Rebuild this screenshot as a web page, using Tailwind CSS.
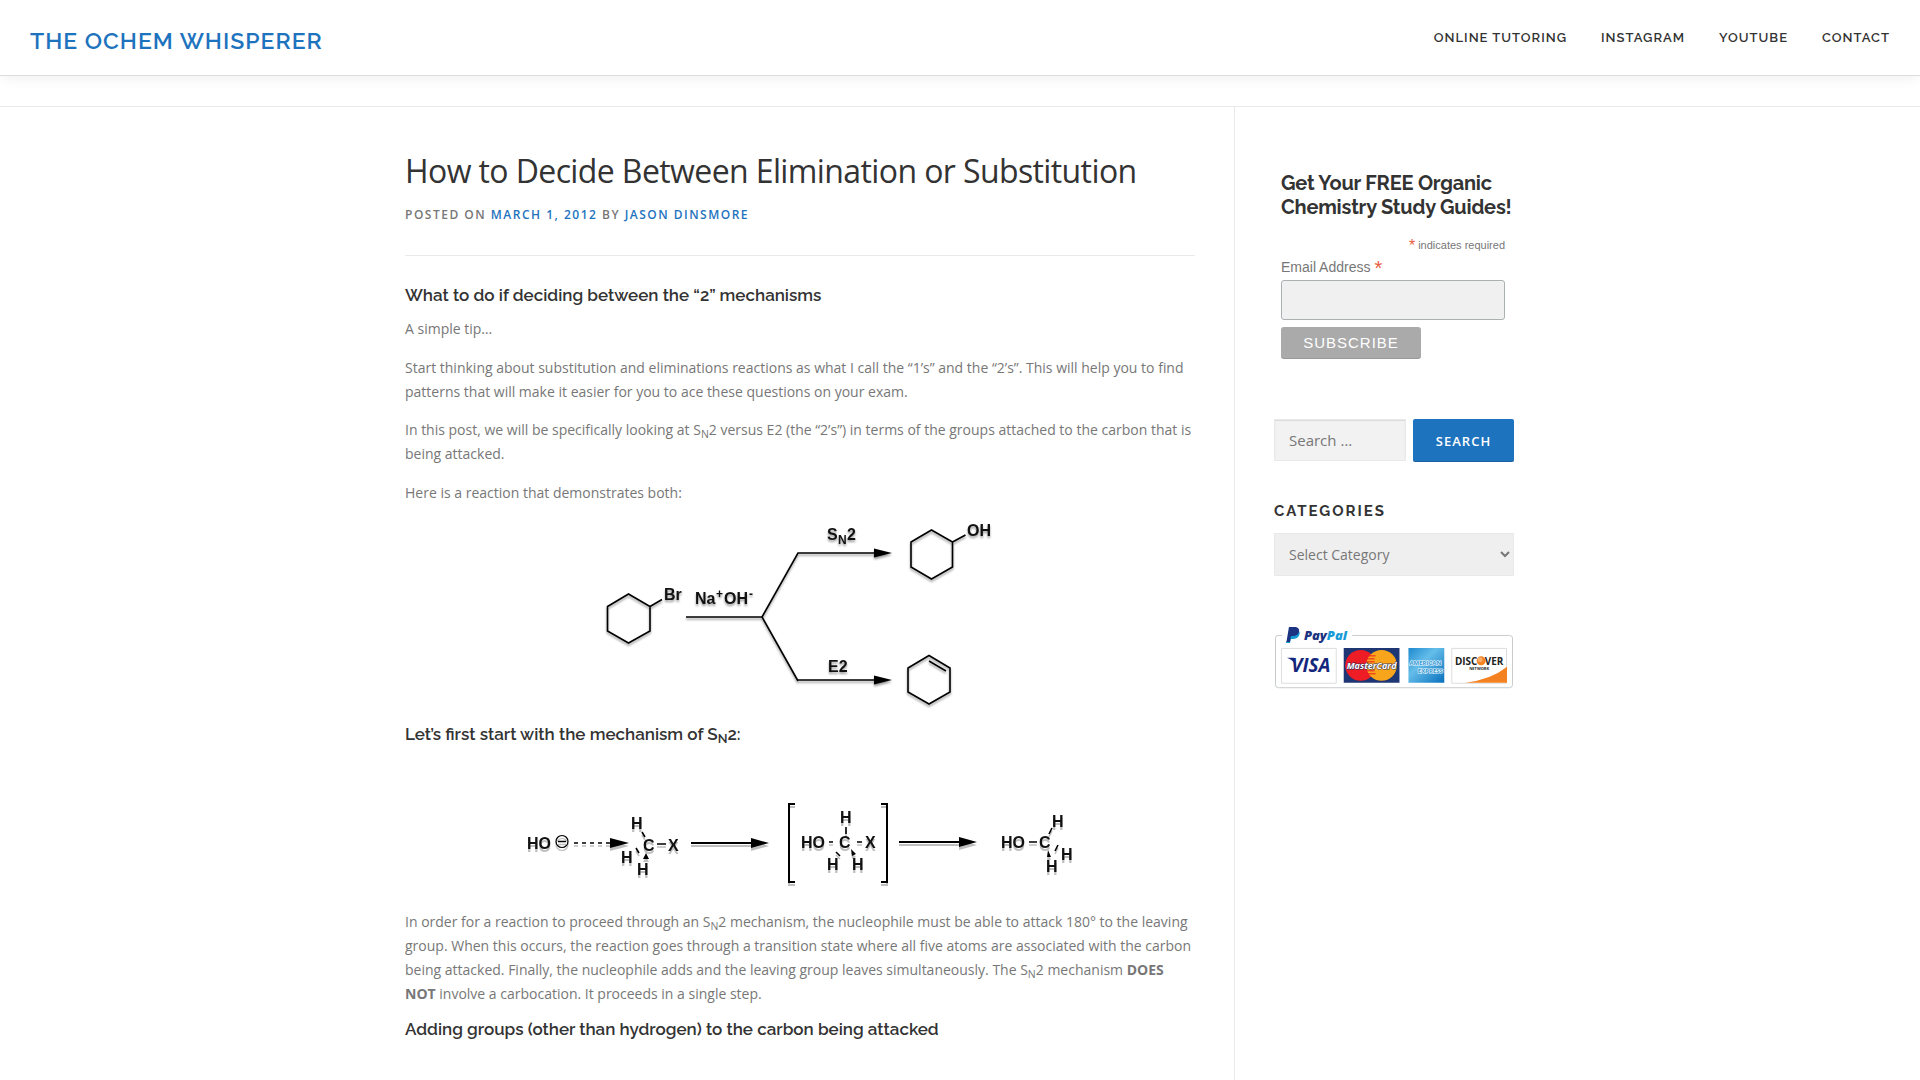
<!DOCTYPE html>
<html lang="en">
<head>
<meta charset="utf-8">
<meta name="viewport" content="width=device-width, initial-scale=1">
<title>How to Decide Between Elimination or Substitution</title>
<script src="https://cdn.jsdelivr.net/npm/@tailwindcss/browser@4"></script>
</head>
<body class="flex min-h-screen flex-col bg-white font-['Open_Sans',sans-serif] text-sm leading-6 text-[#777777]">
<header class="relative flex min-h-[76px] flex-wrap items-center justify-between gap-x-8 border-b border-[#dddddd] bg-white px-[30px] font-['Raleway',Lato,sans-serif] shadow-[0_5px_12px_-2px_rgb(0_0_0/0.06)]">
  <a href="#" class="pt-[6px] text-[23px] leading-8 font-semibold tracking-[1px] text-[#1e73be] uppercase">The Ochem Whisperer</a>
  <nav class="flex flex-wrap gap-x-[34px] text-[13px] font-semibold tracking-[1px] text-[#333333] uppercase">
    <a href="#">Online Tutoring</a>
    <a href="#">Instagram</a>
    <a href="#">YouTube</a>
    <a href="#">Contact</a>
  </nav>
</header>
<div class="h-[31px] border-b border-[#e9e9e9]"></div>
<div class="mx-auto flex w-full max-w-[1110px] flex-1 flex-col max-lg:px-5 lg:flex-row">
  <main class="min-w-0 flex-1 border-[#e9e9e9] lg:border-r lg:pr-[39px]">
    <article class="pt-10">
      <header class="border-b border-[#e9e9e9] pb-7">
        <h1 class="text-[32px] leading-[48px] tracking-[-0.019em] text-[#333333]">How to Decide Between Elimination or Substitution</h1>
        <p class="mt-2 text-xs leading-6 font-semibold tracking-[0.125em] uppercase">Posted on <a href="#" class="text-[#1e73be]">March 1, 2012</a> by <a href="#" class="text-[#1e73be]">Jason Dinsmore</a></p>
      </header>
      <h2 class="mt-[27px] mb-[10px] font-['Raleway',Lato,sans-serif] text-[17px] leading-6 font-semibold text-[#333333]">What to do if deciding between the “2” mechanisms</h2>
      <p class="mb-[15px]">A simple tip…</p>
      <p class="mb-[14px]">Start thinking about substitution and eliminations reactions as what I call the “1’s” and the “2’s”. This will help you to find patterns that will make it easier for you to ace these questions on your exam.</p>
      <p class="mb-[15px]">In this post, we will be specifically looking at S<sub>N</sub>2 versus E2 (the “2’s”) in terms of the groups attached to the carbon that is being attacked.</p>
      <p>Here is a reaction that demonstrates both:</p>
      <svg role="img" aria-label="Bromocyclohexane reacting with NaOH by SN2 and E2" class="mx-auto mt-[5px] mb-[2px] w-full max-w-[420px] drop-shadow-[0_2px_1px_rgb(0_0_0/0.4)]" viewBox="590 510 420 210" fill="none" stroke="#000" stroke-width="1.6">
        <path d="M628.500 594l21.500 12.500v24.500l-21.500 12-21-12v-24.500zM650 606.500l12-7M686 617h76M880 553h-82l-36 64 36 64M798 680h82M931.500 530l21 12v25l-21 12-20.500-12v-25zM952.500 542l13-7M929 655.500l21 12.500v24l-21 12-21-12v-24zM929 661l17 10"/>
        <path d="M874 548.500l18 4.500-18 4.500zM874 675.500l18 4.500-18 4.500z" fill="#000" stroke="none"/>
        <g fill="#111" stroke="none" font-family="Liberation Sans, sans-serif" font-weight="bold" font-size="16">
          <text x="664" y="600">Br</text>
          <text x="695" y="604">Na</text><text x="716" y="598" font-size="12">+</text><text x="724" y="604">OH</text><text x="749" y="598" font-size="12">-</text>
          <text x="827" y="540">S</text><text x="838" y="544" font-size="12">N</text><text x="847" y="540">2</text>
          <text x="828" y="672">E2</text>
          <text x="967" y="536">OH</text>
        </g>
      </svg>
      <h2 class="font-['Raleway',Lato,sans-serif] text-[17px] leading-6 font-semibold text-[#333333]">Let’s first start with the mechanism of S<sub>N</sub>2:</h2>
      <svg role="img" aria-label="Mechanism of the SN2 reaction" class="mx-auto mt-[34px] mb-[10px] w-full max-w-[580px] drop-shadow-[0_3px_0_rgb(0_0_0/0.25)]" viewBox="510 780 580 120" fill="none" stroke="#000" stroke-width="1.6">
        <circle cx="562" cy="841.500" r="6" stroke-width="1.200"/>
        <path d="M558 841.500h8M642 832l3 5M636 848l3 5M657 844h9M846 827v7M829 842h4M857 842h5M836 852l4 4M1029 842h8M1049 834l3-6M1055 851l3-6"/>
        <path d="M574 843h38" stroke-dasharray="4 4"/>
        <path d="M691 843h62M899 842h62" stroke-width="2"/>
        <path d="M795 804h-6v78h6M881 804h6v78h-6" stroke-width="2"/>
        <path d="M610 838l19 5-19 5zM751 838l18 5-18 5zM959 837l18 5-18 5zM646 853l3 6h-6zM851 849l5 5-4 2zM1048 850l3 7h-4z" fill="#000" stroke="none"/>
        <g fill="#111" stroke="none" font-family="Liberation Sans, sans-serif" font-weight="bold" font-size="16">
          <text x="527" y="849">HO</text><text x="631" y="829">H</text><text x="643" y="851">C</text><text x="668" y="851">X</text><text x="621" y="863">H</text><text x="637" y="875">H</text>
          <text x="840" y="823">H</text><text x="801" y="848">HO</text><text x="839" y="848">C</text><text x="865" y="848">X</text><text x="827" y="870">H</text><text x="852" y="870">H</text>
          <text x="1001" y="848">HO</text><text x="1039" y="848">C</text><text x="1052" y="827">H</text><text x="1061" y="860">H</text><text x="1046" y="872">H</text>
        </g>
      </svg>
      <p class="mb-[11px]">In order for a reaction to proceed through an S<sub>N</sub>2 mechanism, the nucleophile must be able to attack 180° to the leaving group. When this occurs, the reaction goes through a transition state where all five atoms are associated with the carbon being attacked. Finally, the nucleophile adds and the leaving group leaves simultaneously. The S<sub>N</sub>2 mechanism <strong>DOES NOT</strong> involve a carbocation. It proceeds in a single step.</p>
      <h2 class="font-['Raleway',Lato,sans-serif] text-[17px] leading-6 font-semibold text-[#333333]">Adding groups (other than hydrogen) to the carbon being attacked</h2>
    </article>
  </main>
  <aside class="w-full shrink-0 pt-16 lg:w-[280px] lg:pr-px lg:pl-[39px]">
    <form class="pl-[7px] font-['Liberation_Sans',sans-serif]">
      <h2 class="font-['Raleway',Lato,sans-serif] text-[20px] leading-6 font-bold tracking-[-0.01em] text-[#333333]">Get Your FREE Organic Chemistry Study Guides!</h2>
      <div class="w-[224px]">
        <p class="mt-4 text-right text-[11px] leading-5"><span class="align-middle text-base leading-4 text-[#e85c41]">*</span> indicates required</p>
        <label for="email" class="block leading-6">Email Address <span class="align-middle text-xl leading-4 text-[#e85c41]">*</span></label>
        <input id="email" type="email" class="mt-px block h-10 w-full rounded-[3px] border border-[#abb0b2] bg-[#f0f0f0] px-2">
        <button type="button" class="mt-[7px] h-8 w-[140px] rounded-[3px] bg-[#aaaaaa] text-[15px] tracking-[1px] text-white uppercase shadow-[inset_0_-1px_0_rgb(0_0_0/0.1)]">Subscribe</button>
      </div>
    </form>
    <form class="mt-[60px] flex items-start justify-between">
      <input type="search" aria-label="Search" placeholder="Search …" class="h-[42px] w-[132px] border border-[#e9e9e9] bg-[#f2f2f2] px-[14px] text-[15px] shadow-[inset_0_1px_1px_rgb(0_0_0/0.1)] placeholder:text-[#777777]">
      <button type="button" class="h-[43px] w-[101px] rounded-[2px] bg-[#1e73be] text-[13px] font-semibold tracking-[1px] text-white uppercase shadow-[inset_0_-1px_0_rgb(0_0_0/0.15)]">Search</button>
    </form>
    <label for="category" class="mt-[37px] mb-[10px] block font-['Raleway',Lato,sans-serif] text-[15px] font-bold tracking-[2px] text-[#333333] uppercase">Categories</label>
    <select id="category" class="h-[43px] w-full border border-[#e9e9e9] bg-[#efefef] pl-[10px] text-sm">
      <option>Select Category</option>
    </select>
    <svg role="img" aria-label="PayPal, Visa, MasterCard, American Express, Discover" class="mt-[49px] w-full max-w-[241px]" viewBox="1274 625 241 66">
      <path d="M1282 635.500h-4q-2.500 0-2.500 2.500v47q0 3 3 3h232q3 0 3-3v-47q0-2.500-3-2.500h-158" fill="none" stroke="#c8ccce"/>
      <path d="M1291 630h7q3 2 1 6-2 3-6 3h-2l-1 4h-4z" fill="#179bd7"/>
      <path d="M1289 627h7q4 1 3 5-1 4-6 4h-2l-1 6h-3.500z" fill="#1b3380"/>
      <g font-family="Open Sans, sans-serif" font-weight="bold" text-anchor="middle">
        <text x="1304" y="640" font-size="13" font-weight="800" font-style="italic" text-anchor="start" fill="#1b3380">Pay<tspan fill="#179bd7">Pal</tspan></text>
        <path d="M1281.500 648.500h55v35h-55zM1452.500 648.500h55v35h-55z" fill="#fff" stroke="#dddddd"/>
        <text x="1311" y="672" font-size="19" font-style="italic" fill="#14277d">VISA</text>
        <path d="M1287 658h7l2 8q-3-6-9-8z" fill="#14277d"/>
        <path d="M1344 648h56v35h-56z" fill="#1f3674"/>
        <circle cx="1361" cy="665.500" r="15.500" fill="#ee1c24"/><circle cx="1382" cy="665.500" r="15.500" fill="#f8a51b"/>
        <path d="M1368 656h8M1367 659h8M1367 662h8M1367 671h8M1368 674h8" stroke="#ee1c24"/>
        <text x="1372" y="669" font-size="9" font-style="italic" fill="#fff" stroke="#26305f" stroke-width="1" paint-order="stroke">MasterCard</text>
        <defs><linearGradient id="amex" x2="1" y2="1"><stop stop-color="#1d89ce"/><stop offset=".4" stop-color="#65bde9"/><stop offset="1" stop-color="#0870bd"/></linearGradient></defs>
        <path d="M1409 648h36v35h-36z" fill="url(#amex)"/>
        <g font-size="6" fill="#3998d2" stroke="#e4f5fd" stroke-width="1.200" paint-order="stroke"><text x="1426" y="665">AMERICAN</text><text x="1431" y="673">EXPRESS</text></g>
        <path d="M1466 683q26-3 42-16v16z" fill="#f58220"/>
        <circle cx="1482" cy="661" r="4.500" fill="#f58220"/><circle cx="1481" cy="660" r="2.500" fill="#f9ad6d"/>
        <g fill="#222222"><text x="1467" y="665" font-size="10">DISC</text><text x="1495" y="665" font-size="10">VER</text><text x="1480" y="670" font-size="4">NETWORK</text></g>
      </g>
    </svg>
  </aside>
</div>
</body>
</html>
